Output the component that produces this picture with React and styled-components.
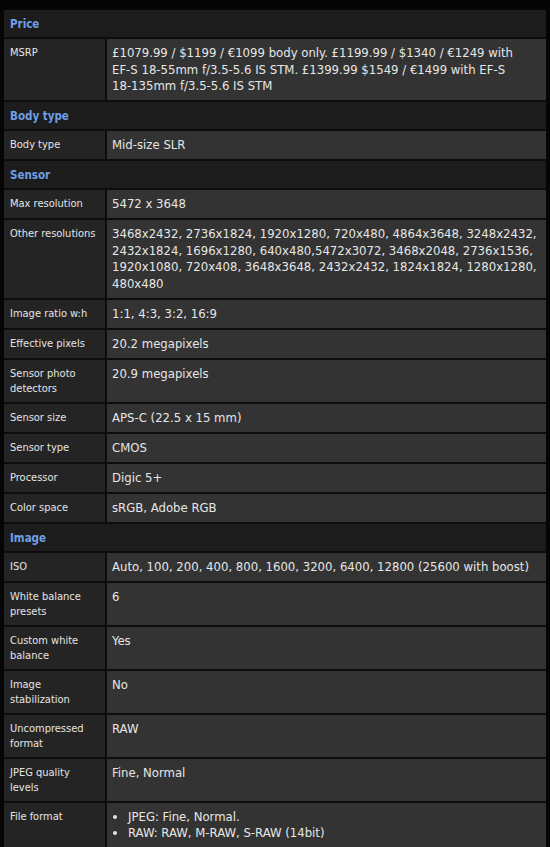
import React from 'react';
import styled, { createGlobalStyle } from 'styled-components';

const GlobalStyle = createGlobalStyle`
  html, body {
    margin: 0;
    padding: 0;
    background: #050505;
  }
  body {
    font-family: 'DejaVu Sans Condensed', 'DejaVu Sans', Verdana, sans-serif;
    font-stretch: condensed;
  }
`;

const Page = styled.div`
  width: 550px;
  min-height: 847px;
  background: #050505;
  padding: 10px 4px 0 4px;
  box-sizing: border-box;
`;

const Specs = styled.div`
  display: grid;
  grid-template-columns: 101px 1fr;
  gap: 2px;
  background: #0d0d0d;
`;

const SectionHeader = styled.div`
  grid-column: 1 / -1;
  background: #1c1c1c;
  color: #6f9fe6;
  font-weight: bold;
  font-size: 11.5px;
  line-height: 16px;
  padding: 6px 6px 5px;
`;

const Label = styled.div`
  background: #242424;
  color: #e4e4e4;
  font-size: 11px;
  line-height: 15px;
  padding: 6px 4px 6px 6px;
`;

const Value = styled.div`
  background: #333333;
  color: #e6e6e6;
  font-size: 13px;
  line-height: 16.5px;
  padding: 6px 5px 5.5px 5px;
`;

const Keep = styled.span`
  white-space: nowrap;
`;

const Bullets = styled.ul`
  margin: 0;
  padding: 0 0 0 16px;
  list-style: disc;
`;

const msrp = (
  <>
    £1079.99 / $1199 / €1099 body only. £1199.99 / $1340 / €1249 with <Keep>EF-S 18-55mm</Keep>{' '}
    f/3.5-5.6 IS STM. £1399.99 $1549 / €1499 with <Keep>EF-S</Keep> <Keep>18-135mm</Keep> f/3.5-5.6 IS STM
  </>
);

const sections = [
  {
    title: 'Price',
    rows: [['MSRP', msrp]],
  },
  {
    title: 'Body type',
    rows: [['Body type', 'Mid-size SLR']],
  },
  {
    title: 'Sensor',
    rows: [
      ['Max resolution', '5472 x 3648'],
      ['Other resolutions', '3468x2432, 2736x1824, 1920x1280, 720x480, 4864x3648, 3248x2432, 2432x1824, 1696x1280, 640x480,5472x3072, 3468x2048, 2736x1536, 1920x1080, 720x408, 3648x3648, 2432x2432, 1824x1824, 1280x1280, 480x480'],
      ['Image ratio w:h', '1:1, 4:3, 3:2, 16:9'],
      ['Effective pixels', '20.2 megapixels'],
      ['Sensor photo detectors', '20.9 megapixels'],
      ['Sensor size', 'APS-C (22.5 x 15 mm)'],
      ['Sensor type', 'CMOS'],
      ['Processor', 'Digic 5+'],
      ['Color space', 'sRGB, Adobe RGB'],
    ],
  },
  {
    title: 'Image',
    rows: [
      ['ISO', 'Auto, 100, 200, 400, 800, 1600, 3200, 6400, 12800 (25600 with boost)'],
      ['White balance presets', '6'],
      ['Custom white balance', 'Yes'],
      ['Image stabilization', 'No'],
      ['Uncompressed format', 'RAW'],
      ['JPEG quality levels', 'Fine, Normal'],
      ['File format', ['JPEG: Fine, Normal.', 'RAW: RAW, M-RAW, S-RAW (14bit)']],
    ],
  },
];

function App() {
  return (
    <>
      <GlobalStyle />
      <Page>
        <Specs>
          {sections.map((section) => (
            <React.Fragment key={section.title}>
              <SectionHeader>{section.title}</SectionHeader>
              {section.rows.map(([label, value]) => (
                <React.Fragment key={label}>
                  <Label>{label}</Label>
                  <Value>
                    {Array.isArray(value) ? (
                      <Bullets>
                        {value.map((item) => (
                          <li key={item}>{item}</li>
                        ))}
                      </Bullets>
                    ) : (
                      value
                    )}
                  </Value>
                </React.Fragment>
              ))}
            </React.Fragment>
          ))}
        </Specs>
      </Page>
    </>
  );
}

export default App;
